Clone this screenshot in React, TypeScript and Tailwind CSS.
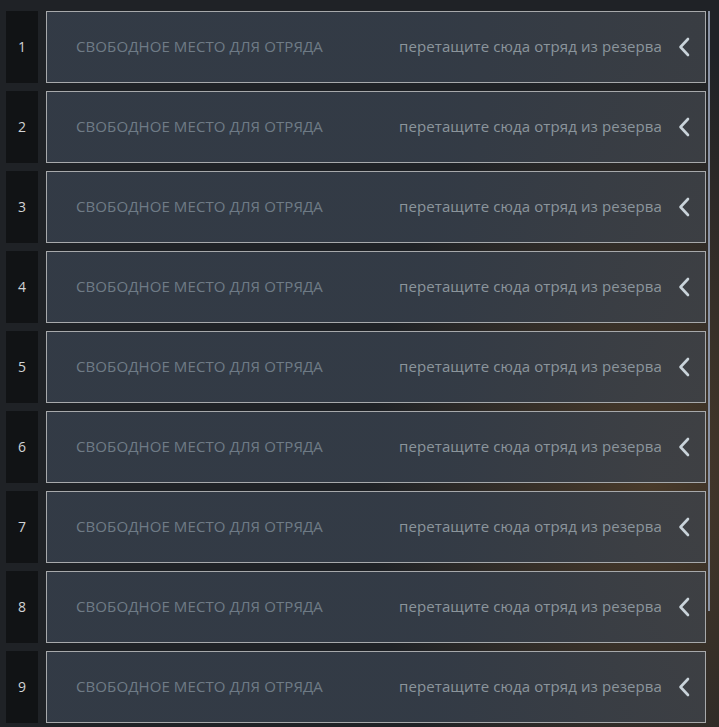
import React from "react";

const rows = [1, 2, 3, 4, 5, 6, 7, 8, 9];

function Chevron() {
  return (
    <svg width="14" height="20" viewBox="0 0 14 20" className="shrink-0">
      <path d="M11 2 L3.5 10 L11 18" fill="none" stroke="#c9d3da" strokeWidth="2.6" strokeLinecap="round" strokeLinejoin="round" />
    </svg>
  );
}

export default function App() {
  return (
    <div
      className="relative w-[719px] h-[727px] overflow-hidden bg-[#1f2226]"
      style={{ fontFamily: '"Open Sans", "Noto Sans", sans-serif' }}
    >
      <div className="absolute inset-0 bg-[radial-gradient(ellipse_280px_440px_at_650px_480px,rgba(115,82,45,0.5),rgba(31,34,38,0)_100%)]" />
      <div className="relative flex flex-col gap-2 pt-[11px] pl-[6px] pr-[13px]">
        {rows.map((n) => (
          <div key={n} className="flex gap-2 h-[72px]">
            <div className="w-8 bg-[#111315] flex items-center justify-center text-[14px] text-[#d2d4d6] pb-[1px]">
              {n}
            </div>
            <div className="flex-1 flex items-center border border-[#a7a9ab] bg-[linear-gradient(90deg,rgba(51,59,70,0.98),rgba(52,60,71,0.95)_60%,rgba(62,66,72,0.85))] pl-[29px] pr-[14px]">
              <span className="text-[15px] text-[#6f7b86] tracking-[0.1px] leading-none mb-[2px]">СВОБОДНОЕ МЕСТО ДЛЯ ОТРЯДА</span>
              <span className="ml-auto text-[15px] text-[#8b959c] mr-[15px] tracking-[0.1px] leading-none mb-[2px]">перетащите сюда отряд из резерва</span>
              <Chevron />
            </div>
          </div>
        ))}
      </div>
      <div className="absolute left-[708px] top-[11px] w-[2px] h-[600px] bg-[#8891a3]" />
    </div>
  );
}
